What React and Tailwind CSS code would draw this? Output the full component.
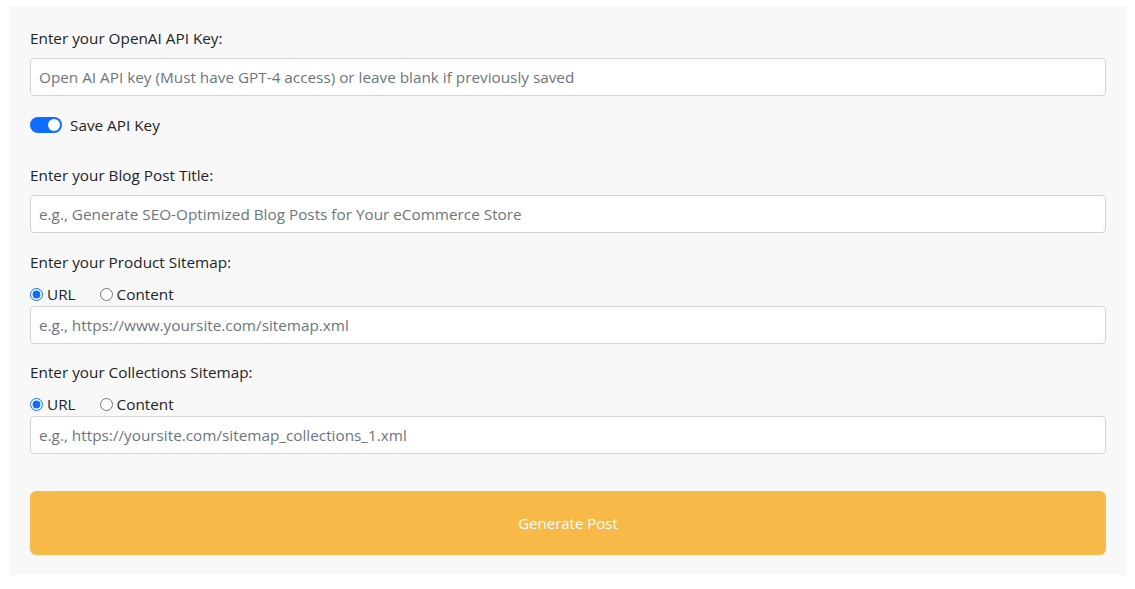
import { useState } from 'react';

const inputClass =
  'block w-full h-[38px] px-2 rounded-[4px] border border-[#ced4da] bg-white text-[15.3px] text-[#212529] placeholder:text-[#6c757d] outline-none';

function SourceRadios({ name, value, onChange }) {
  return (
    <div className="flex items-center h-6">
      <label className="flex items-center mr-6">
        <input
          type="radio"
          name={name}
          checked={value === 'url'}
          onChange={() => onChange('url')}
          className="m-0 mr-1 w-[13px] h-[13px] accent-[#0d6efd]"
        />
        URL
      </label>
      <label className="flex items-center">
        <input
          type="radio"
          name={name}
          checked={value === 'content'}
          onChange={() => onChange('content')}
          className="m-0 mr-1 w-[13px] h-[13px]"
        />
        Content
      </label>
    </div>
  );
}

export default function App() {
  const [saveKey, setSaveKey] = useState(true);
  const [productSource, setProductSource] = useState('url');
  const [collectionSource, setCollectionSource] = useState('url');

  return (
    <div className="bg-white min-h-[589px] pt-[6px] px-[10px] font-['Segoe_UI','Open_Sans',sans-serif] text-[15.3px] leading-6 text-[#212529]">
      <div className="bg-[#f8f8f8] p-5 w-[1116px]">
        {/* API key */}
        <label className="block mb-2">Enter your OpenAI API Key:</label>
        <input
          className={inputClass}
          placeholder="Open AI API key (Must have GPT-4 access) or leave blank if previously saved"
        />

        <div className="flex items-center mt-[17px] h-6">
          <button
            type="button"
            onClick={() => setSaveKey(!saveKey)}
            className={`relative w-8 h-4 rounded-full mr-2 ${saveKey ? 'bg-[#0d6efd]' : 'bg-white border border-[#ced4da]'}`}
          >
            <span
              className={`absolute top-[2px] w-3 h-3 rounded-full ${saveKey ? 'right-[2px] bg-white' : 'left-[2px] bg-[#ced4da]'}`}
            />
          </button>
          <span>Save API Key</span>
        </div>

        {/* Blog post title */}
        <label className="block mt-[26px] mb-2">Enter your Blog Post Title:</label>
        <input
          className={inputClass}
          placeholder="e.g., Generate SEO-Optimized Blog Posts for Your eCommerce Store"
        />

        {/* Product sitemap */}
        <label className="block mt-[17px] mb-2">Enter your Product Sitemap:</label>
        <SourceRadios name="product" value={productSource} onChange={setProductSource} />
        <input className={inputClass} placeholder="e.g., https://www.yoursite.com/sitemap.xml" />

        {/* Collections sitemap */}
        <label className="block mt-4 mb-2">Enter your Collections Sitemap:</label>
        <SourceRadios name="collections" value={collectionSource} onChange={setCollectionSource} />
        <input
          className={inputClass}
          placeholder="e.g., https://yoursite.com/sitemap_collections_1.xml"
        />

        <button
          type="button"
          className="block w-full h-16 mt-[37px] rounded-md bg-[#f7b947] text-white text-[15px]"
        >
          Generate Post
        </button>
      </div>
    </div>
  );
}
